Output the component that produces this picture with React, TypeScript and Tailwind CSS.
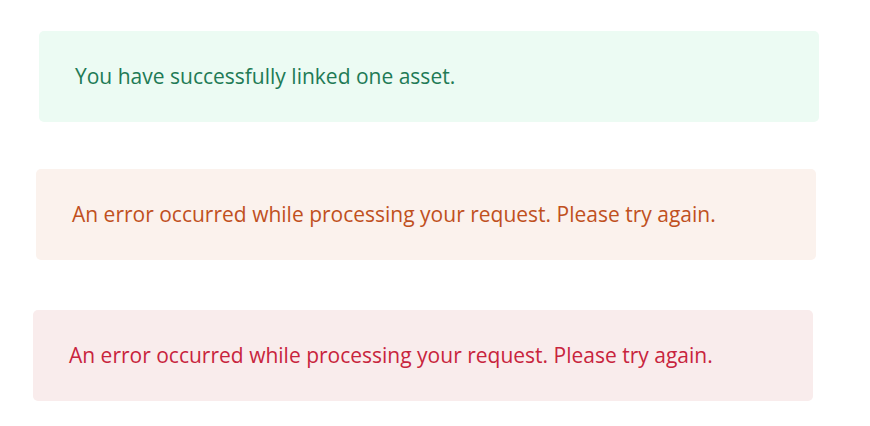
import React from 'react';

type Tone = 'success' | 'warning' | 'danger';

const tones: Record<Tone, string> = {
  success: 'bg-[#ecfbf3] text-[#217a55]',
  warning: 'bg-[#fbf2ed] text-[#c0501e]',
  danger: 'bg-[#f9ecec] text-[#c8243d]',
};

function Alert({ tone, className, children }: { tone: Tone; className?: string; children: React.ReactNode }) {
  return (
    <div className={`flex h-[91px] w-[780px] items-center rounded-[5px] px-9 text-[21px] ${tones[tone]} ${className ?? ''}`}>
      {children}
    </div>
  );
}

export default function App() {
  return (
    <div
      className="flex h-[426px] w-[870px] flex-col bg-white"
      style={{ fontFamily: '"Open Sans", "Noto Sans", sans-serif' }}
    >
      <Alert tone="success" className="ml-[39px] mt-[31px]">
        You have successfully linked one asset.
      </Alert>
      <Alert tone="warning" className="ml-[36px] mt-[47px]">
        An error occurred while processing your request. Please try again.
      </Alert>
      <Alert tone="danger" className="ml-[33px] mt-[50px]">
        An error occurred while processing your request. Please try again.
      </Alert>
    </div>
  );
}
